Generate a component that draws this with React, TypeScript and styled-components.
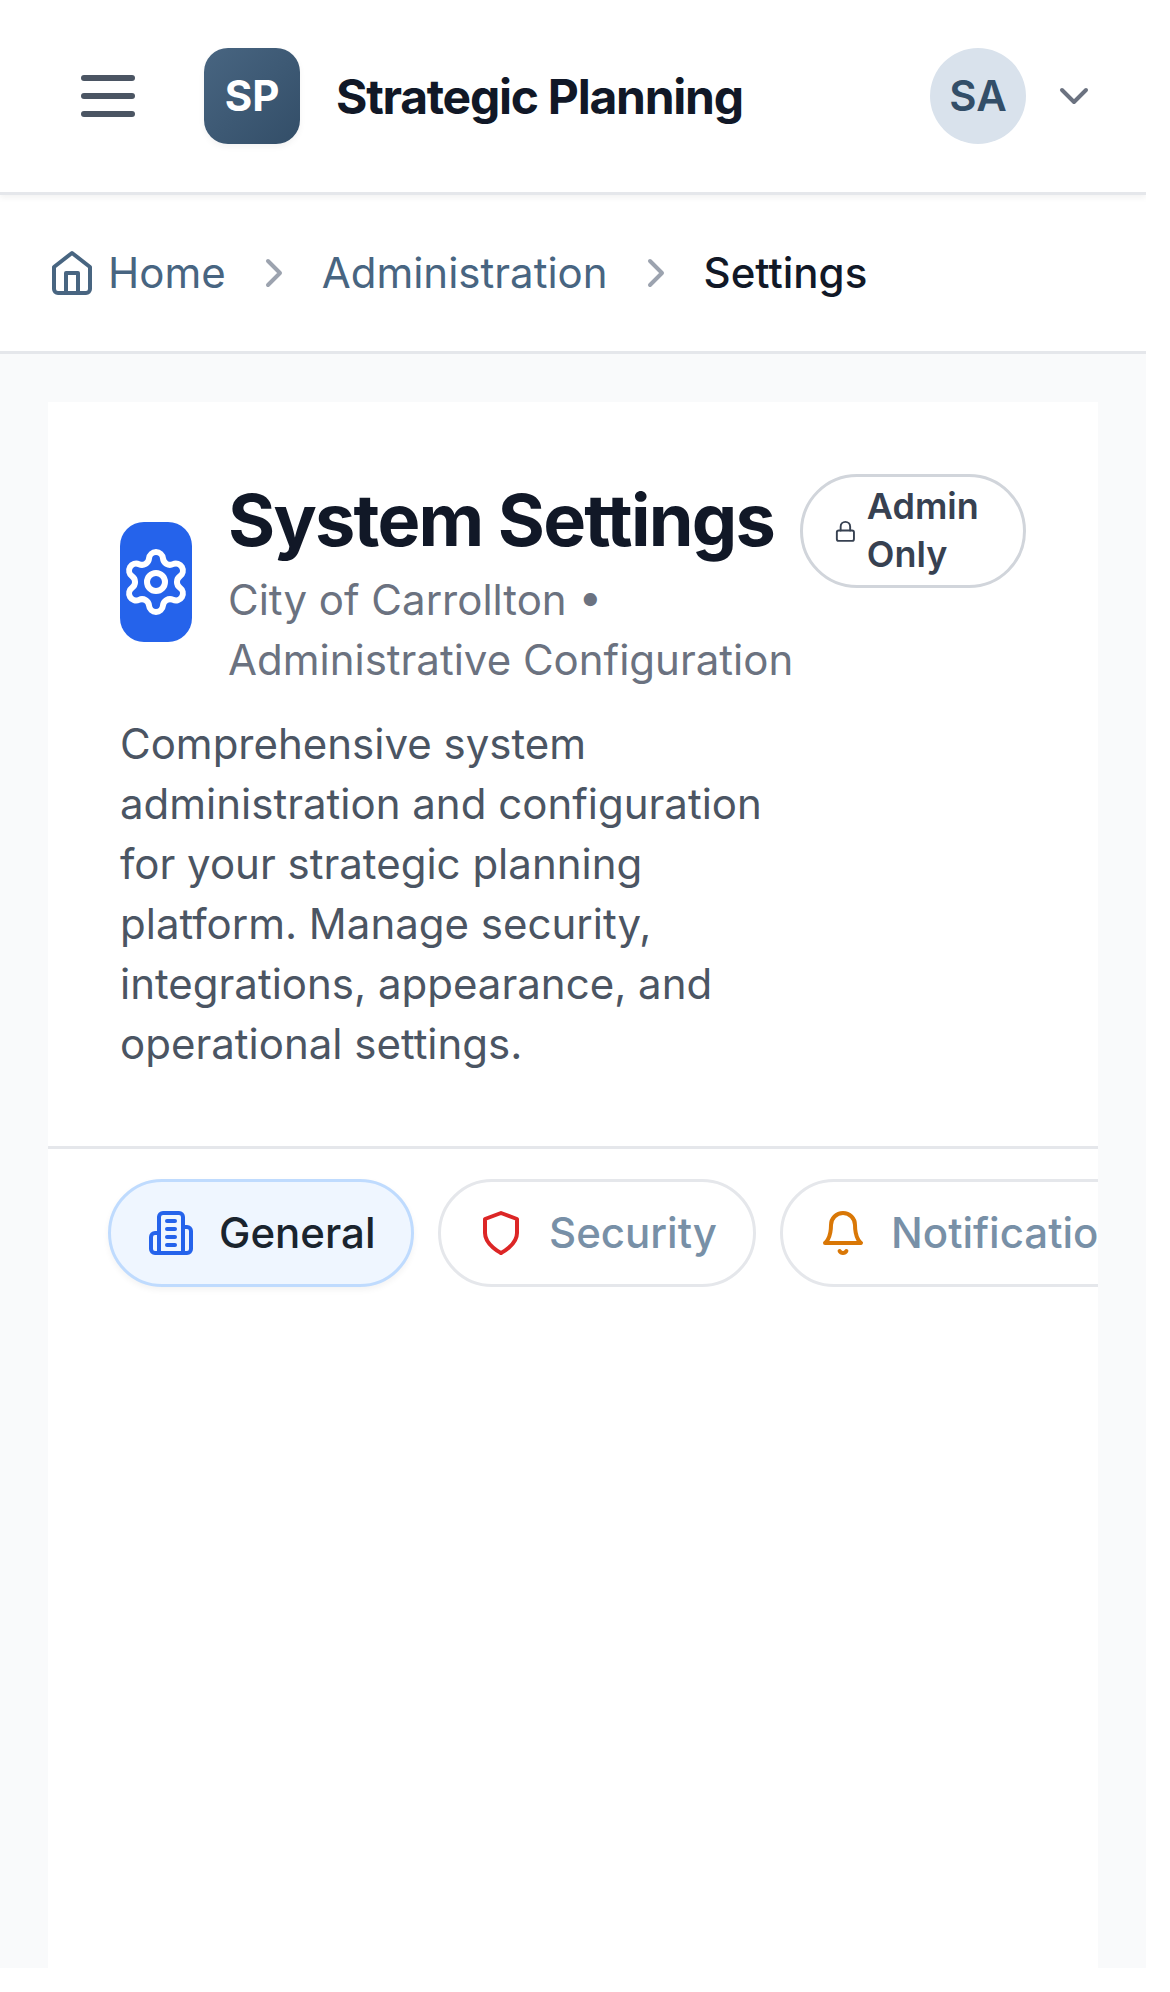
import React from "react";
import styled, { createGlobalStyle } from "styled-components";

const GlobalStyle = createGlobalStyle`
  *, *::before, *::after { box-sizing: border-box; }
  html, body { margin: 0; background: #ffffff; }
  body { font-family: Inter, "Liberation Sans", sans-serif; font-size: 42px; line-height: 60px; overflow: hidden; }
  h1, p { margin: 0; }
  button { font: inherit; letter-spacing: inherit; }
`;

const Page = styled.div`
  display: flex;
  flex-direction: column;
  width: 1146px;
  height: 1968px;
  background: #f9fafb;
  overflow: hidden;
`;

const Header = styled.header`
  display: flex;
  align-items: center;
  flex: none;
  height: 195px;
  padding: 0 48px 0 72px;
  background: #ffffff;
  border-bottom: 3px solid #e5e7eb;
  box-shadow: 0 3px 6px rgba(0, 0, 0, 0.05);
  z-index: 1;
`;

const MenuButton = styled.button`
  display: flex;
  padding: 0;
  margin-right: 60px;
  border: 0;
  background: none;
  color: #4b5563;
`;

const Logo = styled.div`
  display: flex;
  align-items: center;
  justify-content: center;
  width: 96px;
  height: 96px;
  margin-right: 36px;
  border-radius: 24px;
  background: linear-gradient(135deg, #486581, #334e68);
  box-shadow: 0 3px 6px rgba(0, 0, 0, 0.05);
  color: #ffffff;
  font-weight: 700;
`;

const Brand = styled.span`
  padding-top: 2px;
  color: #111827;
  font-size: 48px;
  font-weight: 700;
  letter-spacing: -0.0262em;
`;

const UserMenu = styled.button`
  display: flex;
  align-items: center;
  gap: 24px;
  margin-left: auto;
  padding: 0;
  border: 0;
  background: none;
  color: #6b7280;
`;

const Avatar = styled.span`
  display: flex;
  align-items: center;
  justify-content: center;
  width: 96px;
  height: 96px;
  border-radius: 50%;
  background: #d9e2ec;
  color: #334e68;
  font-weight: 600;
`;

const Breadcrumb = styled.nav`
  display: flex;
  align-items: center;
  flex: none;
  gap: 24px;
  height: 159px;
  padding: 0 48px;
  background: #ffffff;
  border-bottom: 3px solid #e5e7eb;
  color: #9ca3af;
`;

const Crumb = styled.span<{ $current?: boolean }>`
  display: flex;
  align-items: center;
  gap: 12px;
  color: ${(p) => (p.$current ? "#111827" : "#486581")};
  font-weight: ${(p) => (p.$current ? 500 : 400)};
`;

const Card = styled.main`
  display: flex;
  flex-direction: column;
  flex: 1;
  margin: 48px 48px 0;
  background: #ffffff;
  overflow: hidden;
`;

const Intro = styled.section`
  display: flex;
  align-items: flex-start;
  justify-content: space-between;
  padding: 72px;
  border-bottom: 3px solid #e5e7eb;
`;

const IntroText = styled.div`
  width: 680px;
`;

const TitleRow = styled.div`
  display: flex;
  align-items: center;
  gap: 36px;
`;

const Tile = styled.div`
  display: flex;
  align-items: center;
  justify-content: center;
  flex: none;
  width: 72px;
  height: 120px;
  border-radius: 24px;
  background: #2563eb;
  color: #ffffff;
`;

const Title = styled.h1`
  margin-bottom: 4px;
  color: #111827;
  font-size: 72px;
  font-weight: 700;
  line-height: 92px;
  letter-spacing: -0.0245em;
  white-space: nowrap;
`;

const Subtitle = styled.p`
  color: #6b7280;
`;

const Description = styled.p`
  margin-top: 24px;
  color: #4b5563;
`;

const Badge = styled.div`
  display: flex;
  align-items: center;
  flex: none;
  gap: 10px;
  width: 226px;
  height: 114px;
  padding: 0 30px 0 31px;
  border: 3px solid #d1d5db;
  border-radius: 57px;
  color: #374151;
`;

const BadgeLabel = styled.span`
  padding-bottom: 2px;
  font-size: 36px;
  font-weight: 600;
  line-height: 48px;
`;

const Tabs = styled.div`
  display: flex;
  gap: 24px;
  padding: 30px 60px;
`;

const Tab = styled.button<{ $active?: boolean; $width?: number }>`
  display: flex;
  align-items: center;
  flex: none;
  gap: 24px;
  width: ${(p) => (p.$width ? `${p.$width}px` : "auto")};
  height: 108px;
  padding: 0 36px;
  border: 3px solid ${(p) => (p.$active ? "#bfdbfe" : "#e5e7eb")};
  border-radius: 54px;
  background: ${(p) => (p.$active ? "#eff6ff" : "#ffffff")};
  box-shadow: ${(p) => (p.$active ? "0 3px 6px rgba(0, 0, 0, 0.05)" : "none")};
  color: ${(p) => (p.$active ? "#1a242e" : "#7890a7")};
  font-weight: 500;
`;

const Svg = styled.svg<{ $size: number }>`
  display: block;
  flex: none;
  width: ${(p) => p.$size}px;
  height: ${(p) => p.$size}px;
  fill: none;
  stroke: currentColor;
  stroke-width: 2;
  stroke-linecap: round;
  stroke-linejoin: round;
`;

const icons = {
  menu: ["M4 6h16", "M4 12h16", "M4 18h16"],
  chevronDown: ["m6 9 6 6 6-6"],
  chevronRight: ["m9 18 6-6-6-6"],
  home: ["m3 9 9-7 9 7v11a2 2 0 0 1-2 2H5a2 2 0 0 1-2-2z", "M9 22V12h6v10"],
  gear: [
    "M9.671 4.136a2.34 2.34 0 0 1 4.659 0 2.34 2.34 0 0 0 3.319 1.915 2.34 2.34 0 0 1 2.33 4.033 2.34 2.34 0 0 0 0 3.831 2.34 2.34 0 0 1-2.33 4.033 2.34 2.34 0 0 0-3.319 1.915 2.34 2.34 0 0 1-4.659 0 2.34 2.34 0 0 0-3.32-1.915 2.34 2.34 0 0 1-2.33-4.033 2.34 2.34 0 0 0 0-3.831A2.34 2.34 0 0 1 6.35 6.051a2.34 2.34 0 0 0 3.319-1.915",
    "M15 12a3 3 0 1 1-6 0 3 3 0 0 1 6 0z",
  ],
  lock: [
    "M5 11h14a2 2 0 0 1 2 2v7a2 2 0 0 1-2 2H5a2 2 0 0 1-2-2v-7a2 2 0 0 1 2-2z",
    "M7 11V7a5 5 0 0 1 10 0v4",
  ],
  building: [
    "M6 22V4a2 2 0 0 1 2-2h8a2 2 0 0 1 2 2v18Z",
    "M6 12H4a2 2 0 0 0-2 2v6a2 2 0 0 0 2 2h2",
    "M18 9h2a2 2 0 0 1 2 2v9a2 2 0 0 1-2 2h-2",
    "M10 6h4",
    "M10 10h4",
    "M10 14h4",
    "M10 18h4",
  ],
  shield: ["M12 22s8-4 8-10V5l-8-3-8 3v7c0 6 8 10 8 10"],
  bell: ["M6 8a6 6 0 0 1 12 0c0 7 3 9 3 9H3s3-2 3-9", "M10.3 21a1.94 1.94 0 0 0 3.4 0"],
};

type IconName = keyof typeof icons;

function Icon({ name, size = 48, color }: { name: IconName; size?: number; color?: string }) {
  return (
    <Svg $size={size} viewBox="0 0 24 24" color={color} aria-hidden="true">
      {icons[name].map((d) => (
        <path key={d} d={d} />
      ))}
    </Svg>
  );
}

const tabs: { label: string; icon: IconName; color: string; width?: number }[] = [
  { label: "General", icon: "building", color: "#2563eb", width: 306 },
  { label: "Security", icon: "shield", color: "#dc2626", width: 318 },
  { label: "Notifications", icon: "bell", color: "#d97706" },
];

export default function App() {
  return (
    <>
      <GlobalStyle />
      <Page>
        <Header>
          <MenuButton aria-label="Menu">
            <Icon name="menu" size={72} />
          </MenuButton>
          <Logo>SP</Logo>
          <Brand>Strategic Planning</Brand>
          <UserMenu>
            <Avatar>SA</Avatar>
            <Icon name="chevronDown" />
          </UserMenu>
        </Header>
        <Breadcrumb>
          <Crumb>
            <Icon name="home" />
            Home
          </Crumb>
          <Icon name="chevronRight" />
          <Crumb>Administration</Crumb>
          <Icon name="chevronRight" />
          <Crumb $current>Settings</Crumb>
        </Breadcrumb>
        <Card>
          <Intro>
            <IntroText>
              <TitleRow>
                <Tile>
                  <Icon name="gear" size={72} />
                </Tile>
                <div>
                  <Title>System Settings</Title>
                  <Subtitle>City of Carrollton • Administrative Configuration</Subtitle>
                </div>
              </TitleRow>
              <Description>
                Comprehensive system administration and configuration for your strategic planning
                platform. Manage security, integrations, appearance, and operational settings.
              </Description>
            </IntroText>
            <Badge>
              <Icon name="lock" size={22.8} />
              <BadgeLabel>Admin Only</BadgeLabel>
            </Badge>
          </Intro>
          <Tabs>
            {tabs.map((t, i) => (
              <Tab key={t.label} $active={i === 0} $width={t.width}>
                <Icon name={t.icon} color={t.color} />
                {t.label}
              </Tab>
            ))}
          </Tabs>
        </Card>
      </Page>
    </>
  );
}
